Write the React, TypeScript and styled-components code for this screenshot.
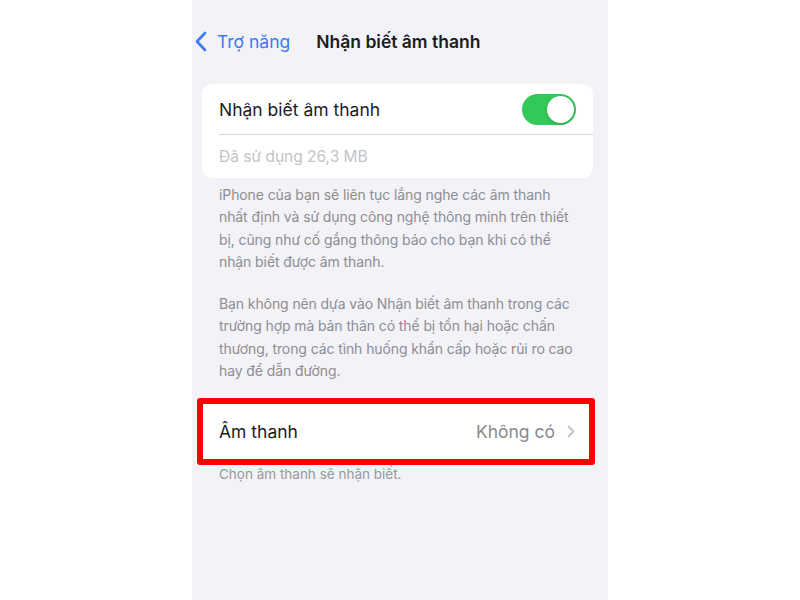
import styled, { createGlobalStyle } from "styled-components";

const GlobalStyle = createGlobalStyle`
  html, body {
    margin: 0;
    padding: 0;
    background: #ffffff;
  }
  body {
    font-family: Inter, "Noto Sans", "Liberation Sans", sans-serif;
  }
`;

const Page = styled.div`
  display: flex;
  justify-content: center;
  width: 800px;
  height: 600px;
`;

const Screen = styled.div`
  width: 416px;
  height: 600px;
  background: #f2f2f7;
  display: flex;
  flex-direction: column;
`;

const NavBar = styled.div`
  height: 84px;
  display: flex;
  align-items: center;
  padding-left: 3px;
  padding-bottom: 2px;
  box-sizing: border-box;
`;

const BackButton = styled.div`
  display: flex;
  align-items: center;
  gap: 10px;
  color: #3a7cf5;
  font-size: 17.5px;
`;

const NavTitle = styled.div`
  margin-left: 26px;
  font-size: 17.5px;
  font-weight: 600;
  color: #1c1c1e;
`;

const Content = styled.div`
  padding: 0 15px 0 10px;
  display: flex;
  flex-direction: column;
`;

const Card = styled.div`
  background: #ffffff;
  border-radius: 10px;
  overflow: hidden;
`;

const Row = styled.div<{ $height: number; $divider?: boolean }>`
  height: ${(p) => p.$height}px;
  display: flex;
  align-items: center;
  justify-content: space-between;
  padding: 0 17px;
  position: relative;
  &::after {
    content: "";
    display: ${(p) => (p.$divider ? "block" : "none")};
    position: absolute;
    left: 17px;
    right: 0;
    bottom: 0;
    height: 1px;
    background: #d6d6da;
  }
`;

const Label = styled.span<{ $muted?: boolean }>`
  font-size: ${(p) => (p.$muted ? "15.5px" : "17.5px")};
  color: ${(p) => (p.$muted ? "#c3c3c8" : "#1c1c1e")};
`;

const Toggle = styled.div`
  width: 54px;
  height: 31px;
  border-radius: 16px;
  background: #34c759;
  display: flex;
  justify-content: flex-end;
  align-items: center;
  padding: 2px;
  box-sizing: border-box;
`;

const Knob = styled.div`
  width: 27px;
  height: 27px;
  border-radius: 50%;
  background: #ffffff;
  box-shadow: 0 1px 3px rgba(0, 0, 0, 0.2);
`;

const Footnote = styled.div`
  padding: 6px 17px 0;
  color: #8d8d92;
  font-size: 14px;
  line-height: 22.3px;
  letter-spacing: -0.1px;
`;

const Paragraph = styled.p`
  margin: 0 0 20px;
  &:last-child {
    margin-bottom: 0;
  }
`;

const Highlight = styled.div`
  margin: 16px -2px 0 -5px;
  border: 6px solid #ff0000;
  border-radius: 3px;
  background: #ffffff;
`;

const HighlightRow = styled.div`
  height: 55px;
  display: flex;
  align-items: center;
  justify-content: space-between;
  padding: 0 14px 0 16px;
`;

const Value = styled.div`
  display: flex;
  align-items: center;
  gap: 12px;
  color: #8a8a8e;
  font-size: 17.5px;
`;

const SmallNote = styled.div`
  padding: 0 17px;
  color: #98989d;
  font-size: 13.5px;
  line-height: 18px;
`;

const BackChevron = () => (
  <svg width="12" height="21" viewBox="0 0 12 21" fill="none">
    <path
      d="M10 2L2 10.5L10 19"
      stroke="#3a7cf5"
      strokeWidth="2.6"
      strokeLinecap="round"
      strokeLinejoin="round"
    />
  </svg>
);

const Chevron = () => (
  <svg width="8" height="13" viewBox="0 0 8 13" fill="none">
    <path
      d="M1.5 1.5L6.5 6.5L1.5 11.5"
      stroke="#c4c4c7"
      strokeWidth="1.8"
      strokeLinecap="round"
      strokeLinejoin="round"
    />
  </svg>
);

const App = () => {
  return (
    <>
      <GlobalStyle />
      <Page>
        <Screen>
          <NavBar>
            <BackButton>
              <BackChevron />
              Trợ năng
            </BackButton>
            <NavTitle>Nhận biết âm thanh</NavTitle>
          </NavBar>
          <Content>
            <Card>
              <Row $height={51} $divider>
                <Label>Nhận biết âm thanh</Label>
                <Toggle>
                  <Knob />
                </Toggle>
              </Row>
              <Row $height={43}>
                <Label $muted>Đã sử dụng 26,3 MB</Label>
              </Row>
            </Card>
            <Footnote>
              <Paragraph>
                iPhone của bạn sẽ liên tục lắng nghe các âm thanh
                <br />
                nhất định và sử dụng công nghệ thông minh trên thiết
                <br />
                bị, cũng như cố gắng thông báo cho bạn khi có thể
                <br />
                nhận biết được âm thanh.
              </Paragraph>
              <Paragraph>
                Bạn không nên dựa vào Nhận biết âm thanh trong các
                <br />
                trường hợp mà bản thân có thể bị tổn hại hoặc chấn
                <br />
                thương, trong các tình huống khẩn cấp hoặc rủi ro cao
                <br />
                hay để dẫn đường.
              </Paragraph>
            </Footnote>
            <Highlight>
              <HighlightRow>
                <Label>Âm thanh</Label>
                <Value>
                  Không có
                  <Chevron />
                </Value>
              </HighlightRow>
            </Highlight>
            <SmallNote>Chọn âm thanh sẽ nhận biết.</SmallNote>
          </Content>
        </Screen>
      </Page>
    </>
  );
};

export default App;
